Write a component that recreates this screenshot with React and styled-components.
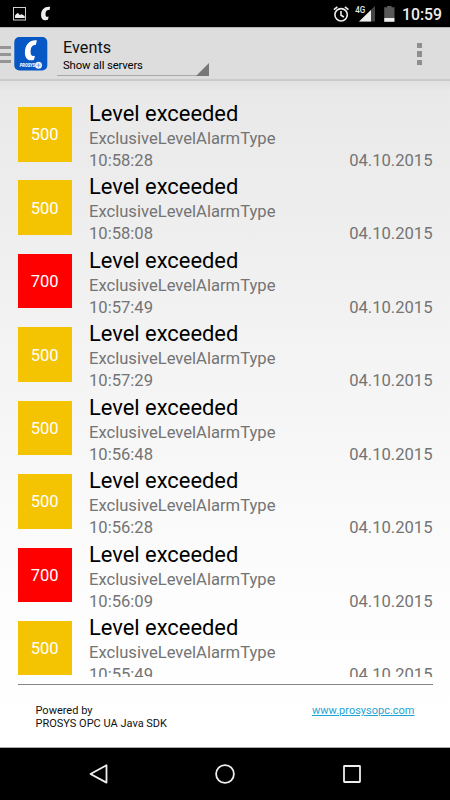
import styled, { createGlobalStyle } from "styled-components";

const GlobalStyle = createGlobalStyle`
  * {
    box-sizing: border-box;
  }
  body {
    margin: 0;
    font-family: Roboto, sans-serif;
    background: #000;
  }
`

const Screen = styled.div`
  display: flex;
  flex-direction: column;
  width: 450px;
  height: 800px;
  overflow: hidden;
`

const StatusBar = styled.div`
  display: flex;
  flex: none;
  justify-content: space-between;
  height: 27px;
  background: #000;
`

const Header = styled.header`
  display: flex;
  flex: none;
  height: 54px;
  background: #dddddd;
  border-top: 1px solid #b4b4b4;
  border-bottom: 2px solid #cacaca;
`

const Drawer = styled.div`
  display: flex;
  flex-direction: column;
  gap: 4px;
  width: 11px;
  margin-right: 3px;
  padding-top: 18px;
`

const DrawerLine = styled.span`
  height: 3px;
  background: #959595;
`

const Spinner = styled.div`
  position: relative;
  width: 152px;
  height: 48px;
  margin-left: 9px;
  padding: 9px 0 0 6px;
  border-bottom: 1px solid #a8a8a8;

  &::after {
    content: "";
    position: absolute;
    right: 0;
    bottom: -1px;
    border-left: 13px solid transparent;
    border-bottom: 13px solid #777;
  }
`

const ScreenTitle = styled.div`
  font-size: 16.2px;
  line-height: 21px;
  letter-spacing: 0.05px;
  color: #111;
`

const Filter = styled.div`
  font-size: 11.3px;
  line-height: 16px;
  letter-spacing: -0.13px;
  color: #000;
`

const Menu = styled.div`
  display: flex;
  flex-direction: column;
  gap: 3px;
  margin: 15px 28px 0 auto;
`

const Dot = styled.span`
  width: 5.5px;
  height: 5.3px;
  background: #8f8f8f;
`

const Content = styled.main`
  display: flex;
  flex: 1;
  flex-direction: column;
  min-height: 0;
  padding: 18px 17.5px 0;
  background: linear-gradient(#e0e0e0 0, #e9e9e9 10px, #fdfdfd 78%, #fff 100%);
  border-bottom: 1px solid #aaa;
`

const EventList = styled.div`
  height: 578px;
  overflow: hidden;
`

const EventRow = styled.div`
  display: flex;
  height: 73.43px;
`

const Severity = styled.div`
  display: flex;
  flex: none;
  align-items: center;
  justify-content: center;
  width: 54.5px;
  height: 54.5px;
  margin: 8px 17px 0 0;
  padding-top: 1px;
  font-size: 16.5px;
  color: #fff;
  background: ${ ({$level}) => $level >= 700 ? "#ff0000" : "#f4c403"};
`

const Details = styled.div`
  flex: 1;
  padding-top: 1px;
  font-size: 16.6px;
  line-height: 22px;
  color: #747474;
`

const EventName = styled.div`
  font-size: 21.9px;
  line-height: 28px;
  color: #000;
`

const Timestamp = styled.div`
  display: flex;
  justify-content: space-between;
`

const Footer = styled.footer`
  display: flex;
  justify-content: space-between;
  margin-top: 7px;
  padding: 20px 18px 0;
  border-top: 1px solid #858585;
  font-size: 11px;
  line-height: 12.8px;
  color: #111;
`

const Link = styled.a`
  height: 13px;
  color: #1da5d3;
  text-decoration: underline;
`

const NavBar = styled.nav`
  display: flex;
  flex: none;
  align-items: center;
  justify-content: center;
  height: 52px;
  background: #000;
`

const events = [
  { level: 500, time: "10:58:28" },
  { level: 500, time: "10:58:08" },
  { level: 700, time: "10:57:49" },
  { level: 500, time: "10:57:29" },
  { level: 500, time: "10:56:48" },
  { level: 500, time: "10:56:28" },
  { level: 700, time: "10:56:09" },
  { level: 500, time: "10:55:49" },
]

const Notifications = () => (
  <svg width="60" height="27">
    <rect x="13.5" y="7.5" width="12" height="12.5" fill="none" stroke="#cfcfcf" />
    <path d="M15 18v-2.5l1.5-1.8 1.6-.6 1.6 2 2-.8 3 1.6V18z" fill="#eee" />
    <path d="M50.2 6.9l-.8 3.3c-2.4-.5-3.8 1-3.9 3.7-.1 2.5 1 3.4 3.2 2.7l-.8 3.2c-4.4 1.4-7-.8-6.8-5.4.2-5 4-8.4 9.1-7.5z" fill="#eee" />
  </svg>
)

const Clock = styled.span`
  width: 48px;
  font-size: 15.8px;
  font-weight: 500;
  line-height: 29px;
  color: #eee;
`

const StatusIcons = styled.div`
  display: flex;
`

const Network = styled.text`
  font: 500 8.2px Roboto, sans-serif;
  fill: #e5e5e5;
`

const SystemIcons = () => (
  <svg width="70" height="27">
    <g fill="none" stroke="#eee" strokeWidth="1.6">
      <circle cx="9.1" cy="14.8" r="6.2" />
      <path d="M9 11v4.2l2.9 1.8M1.9 9.7l3.5-2.9M16.4 9.7l-3.5-2.9" />
    </g>
    <path d="M43 6v15.6H27z" fill="#444" />
    <path d="M39 9.9v11.7H27z" fill="#eee" />
    <Network x="23.2" y="12.8" textLength="10" lengthAdjust="spacingAndGlyphs">4G</Network>
    <path d="M52.2 7.3h2.8V6h4.5v1.3h3V18H52.2z" fill="#585858" />
    <path d="M52.2 18h10.3v3.8H52.2z" fill="#eee" />
  </svg>
)

const LogoText = styled.text`
  font: italic 900 5.6px Roboto, sans-serif;
  fill: #fff;
`

const Logo = () => (
  <svg width="34" height="53">
    <rect x=".3" y="9" width="33" height="33.5" rx="5" fill="#0757c5" />
    <path d="M22.9 12.4l-1.2 4.7c-3.3-.4-4.9 2-5.1 6.1-.2 3.8 1.1 5.4 4.4 4.5l-1.1 4.2c-6 1.7-9.3-1.6-9-8.1.4-7.4 5.3-12.3 12-11.4z" fill="#fff" />
    <LogoText x="5.8" y="39.3" textLength="15.2" lengthAdjust="spacingAndGlyphs">PROSYS</LogoText>
    <circle cx="24.5" cy="37.3" r="3.5" fill="#e6eefa" />
    <path d="M22.6 37.3h3.8M24.5 35.4v3.8" stroke="#6797dc" strokeWidth=".7" />
  </svg>
)

const App = () => {
  return (
    <Screen>
      <GlobalStyle />
      <StatusBar>
        <Notifications />
        <StatusIcons>
          <SystemIcons />
          <Clock>10:59</Clock>
        </StatusIcons>
      </StatusBar>
      <Header>
        <Drawer>
          <DrawerLine />
          <DrawerLine />
          <DrawerLine />
        </Drawer>
        <Logo />
        <Spinner>
          <ScreenTitle>Events</ScreenTitle>
          <Filter>Show all servers</Filter>
        </Spinner>
        <Menu>
          <Dot />
          <Dot />
          <Dot />
        </Menu>
      </Header>
      <Content>
        <EventList>
          {events.map(({level, time}) => (
            <EventRow key={time}>
              <Severity $level={level}>{level}</Severity>
              <Details>
                <EventName>Level exceeded</EventName>
                <div>ExclusiveLevelAlarmType</div>
                <Timestamp>
                  <span>{time}</span>
                  <span>04.10.2015</span>
                </Timestamp>
              </Details>
            </EventRow>
          ))}
        </EventList>
        <Footer>
          <div>
            Powered by<br />
            PROSYS OPC UA Java SDK
          </div>
          <Link>www.prosysopc.com</Link>
        </Footer>
      </Content>
      <NavBar>
        <svg width="450" height="52" fill="none" stroke="#eee" strokeWidth="1.8">
          <path d="M106.5 17.2v17.4L90.5 26z" strokeLinejoin="round" />
          <circle cx="225" cy="26" r="8.9" />
          <rect x="344" y="18" width="16" height="16" rx=".5" />
        </svg>
      </NavBar>
    </Screen>
  );
}

export default App;
